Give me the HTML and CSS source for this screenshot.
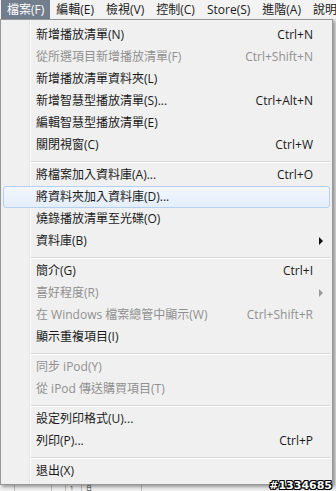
FILE: index.html
```html
<!DOCTYPE html>
<html lang="zh-Hant">
<head>
<meta charset="utf-8">
<title>檔案選單</title>
<link rel="stylesheet" href="styles.css">
</head>
<body>
<div class="screen">
  <nav class="menubar">
    <span class="mb-item active">檔案(F)</span>
    <span class="mb-item">編輯(E)</span>
    <span class="mb-item">檢視(V)</span>
    <span class="mb-item">控制(C)</span>
    <span class="mb-item">Store(S)</span>
    <span class="mb-item">進階(A)</span>
    <span class="mb-item">說明</span>
  </nav>
  <div class="stage">
    <ul class="menu">
      <li class="row"><span class="label">新增播放清單(N)</span><span class="key">Ctrl+N</span></li>
      <li class="row disabled"><span class="label">從所選項目新增播放清單(F)</span><span class="key">Ctrl+Shift+N</span></li>
      <li class="row"><span class="label">新增播放清單資料夾(L)</span></li>
      <li class="row"><span class="label">新增智慧型播放清單(S)...</span><span class="key">Ctrl+Alt+N</span></li>
      <li class="row"><span class="label">編輯智慧型播放清單(E)</span></li>
      <li class="row"><span class="label">關閉視窗(C)</span><span class="key">Ctrl+W</span></li>
      <li class="sep"></li>
      <li class="row"><span class="label">將檔案加入資料庫(A)...</span><span class="key">Ctrl+O</span></li>
      <li class="row hover"><span class="label">將資料夾加入資料庫(D)...</span></li>
      <li class="row"><span class="label">燒錄播放清單至光碟(O)</span></li>
      <li class="row"><span class="label">資料庫(B)</span><span class="arrow"></span></li>
      <li class="sep"></li>
      <li class="row"><span class="label">簡介(G)</span><span class="key">Ctrl+I</span></li>
      <li class="row disabled"><span class="label">喜好程度(R)</span><span class="arrow"></span></li>
      <li class="row disabled"><span class="label">在 Windows 檔案總管中顯示(W)</span><span class="key">Ctrl+Shift+R</span></li>
      <li class="row"><span class="label">顯示重複項目(I)</span></li>
      <li class="sep"></li>
      <li class="row disabled"><span class="label">同步 iPod(Y)</span></li>
      <li class="row disabled"><span class="label">從 iPod 傳送購買項目(T)</span></li>
      <li class="sep"></li>
      <li class="row"><span class="label">設定列印格式(U)...</span></li>
      <li class="row"><span class="label">列印(P)...</span><span class="key">Ctrl+P</span></li>
      <li class="sep"></li>
      <li class="row"><span class="label">退出(X)</span></li>
    </ul>
    <div class="backdrop">
      <span class="cell c1"></span><span class="cell c2"></span><span class="cell c3"></span><span class="cell c4">1</span><span class="cell c5">日</span>
    </div>
    <span class="watermark">#1334685</span>
  </div>
</div>
</body>
</html>
```
FILE: styles.css
```css
* { box-sizing: border-box; }
html, body { margin: 0; padding: 0; }
body {
  width: 336px;
  height: 491px;
  overflow: hidden;
  background: #e6e6e6;
  font-family: "Open Sans", "Noto Sans CJK TC", sans-serif;
  font-size: 12px;
  color: #1a1a1a;
}
.screen {
  display: flex;
  flex-direction: column;
  height: 491px;
}
.menubar {
  display: flex;
  height: 20px;
  padding-left: 1px;
  background: #f3f3f3;
  white-space: nowrap;
  overflow: hidden;
}
.mb-item {
  padding: 0 6px;
  line-height: 20px;
  color: #1a1a1a;
}
.mb-item.active {
  background: #737e8d;
  color: #fff;
}
.stage {
  position: relative;
  flex: 1;
  display: flex;
  flex-direction: column;
}
.menu {
  list-style: none;
  margin: 0;
  width: 333px;
  padding: 4px 2px 2px 2px;
  border: 1px solid #979797;
  background:
    linear-gradient(to right, transparent 28px, #e2e3e3 28px, #e2e3e3 29px, #fff 29px, #fff 30px, transparent 30px),
    #f0f0f0;
  box-shadow: 2px 2px 3px rgba(0, 0, 0, 0.35);
  position: relative;
  z-index: 1;
}
.row {
  display: grid;
  grid-template-columns: 32px 1fr auto 16px;
  align-items: center;
  height: 22px;
  line-height: 20px;
  border: 1px solid transparent;
  border-radius: 3px;
  white-space: nowrap;
}
.row .label { grid-column: 2; }
.row .key { grid-column: 3; text-align: right; }
.row .arrow {
  grid-column: 4;
  justify-self: center;
  width: 0;
  height: 0;
  border-top: 4px solid transparent;
  border-bottom: 4px solid transparent;
  border-left: 4px solid #111;
}
.row.disabled { color: #909090; }
.row.disabled .arrow { border-left-color: #9a9a9a; }
.row.hover {
  border-color: #b4d0f2;
  background: linear-gradient(#f3f7fd, #e4edfb);
}
.sep {
  height: 8px;
  margin-left: 28px;
  padding-top: 5px;
}
.sep::before {
  content: "";
  display: block;
  height: 1px;
  background: #d7d7d7;
  border-bottom: 1px solid #fff;
  box-sizing: content-box;
}
.backdrop {
  flex: 1;
  display: flex;
  background: #eeeeee;
  font-size: 6px;
  line-height: 6px;
  color: #333;
  overflow: hidden;
}
.cell {
  border-right: 1px solid #bdbdbd;
  padding-left: 4px;
}
.c1 { width: 15px; }
.c2 { width: 37px; }
.c3 { width: 14px; }
.c4 { width: 16px; }
.c5 { width: 60px; }
.watermark {
  position: absolute;
  right: 4px;
  bottom: -2px;
  z-index: 2;
  font-family: "DejaVu Sans", sans-serif;
  font-weight: bold;
  font-size: 11px;
  line-height: 14px;
  color: #fff;
  text-shadow: 1px 0 0 #000, -1px 0 0 #000, 0 1px 0 #000, 0 -1px 0 #000, 1px 1px 0 #000, -1px -1px 0 #000, 1px -1px 0 #000, -1px 1px 0 #000;
}
```
